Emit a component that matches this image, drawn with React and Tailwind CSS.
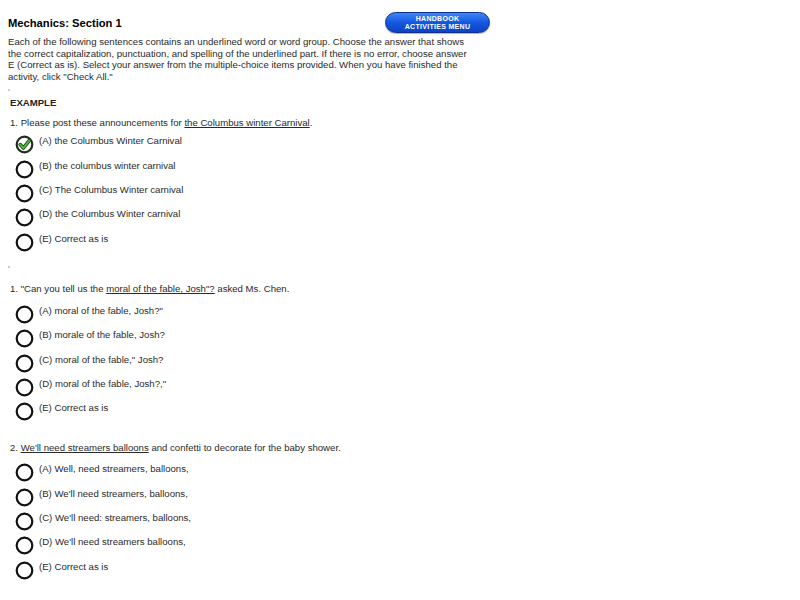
import React from "react";

const sections = [
  {
    dot: true,
    label: "EXAMPLE",
    gap: "mt-[6px]",
    optGap: "mt-[4px]",
    question: (
      <>
        1. Please post these announcements for <span className="underline">the Columbus winter Carnival</span>.
      </>
    ),
    options: [
      "(A) the Columbus Winter Carnival",
      "(B) the columbus winter carnival",
      "(C) The Columbus Winter carnival",
      "(D) the Columbus Winter carnival",
      "(E) Correct as is",
    ],
    checked: 0,
  },
  {
    dot: true,
    gap: "mt-[12px]",
    optGap: "mt-[7px]",
    question: (
      <>
        1. "Can you tell us the <span className="underline">moral of the fable, Josh"?</span> asked Ms. Chen.
      </>
    ),
    options: [
      '(A) moral of the fable, Josh?"',
      "(B) morale of the fable, Josh?",
      '(C) moral of the fable," Josh?',
      '(D) moral of the fable, Josh?,"',
      "(E) Correct as is",
    ],
  },
  {
    gap: "mt-[18px]",
    optGap: "mt-[7px]",
    question: (
      <>
        2. <span className="underline">We'll need streamers balloons</span> and confetti to decorate for the baby shower.
      </>
    ),
    options: [
      "(A) Well, need streamers, balloons,",
      "(B) We'll need streamers, balloons,",
      "(C) We'll need: streamers, balloons,",
      "(D) We'll need streamers balloons,",
      "(E) Correct as is",
    ],
  },
];

function Radio({ checked }) {
  return (
    <svg width="19" height="19" viewBox="0 0 19 19" className="shrink-0">
      <circle cx="9.5" cy="9.5" r="7.8" fill="white" stroke={checked ? "#1f2d1f" : "#111"} strokeWidth="2.2" />
      {checked && (
        <>
          <path d="M5.2 9.6 L8.4 13 L14.2 5.6" fill="none" stroke="#1d3d1d" strokeWidth="3.6" strokeLinecap="round" strokeLinejoin="round" />
          <path d="M5.2 9.6 L8.4 13 L14.2 5.6" fill="none" stroke="#4cbb3c" strokeWidth="2" strokeLinecap="round" strokeLinejoin="round" />
        </>
      )}
    </svg>
  );
}

export default function App() {
  return (
    <div className="w-[800px] h-[600px] bg-white text-[#2a2a2a] overflow-hidden" style={{ fontFamily: '"Liberation Sans", Arial, sans-serif' }}>
      <div className="flex items-center justify-between w-[490px] pl-[8px] pt-[12px]">
        <h1 className="text-[11.2px] font-bold text-black leading-[14px]">Mechanics: Section 1</h1>
        <button className="w-[105px] h-[21px] rounded-full border border-[#0b2f8a] bg-gradient-to-b from-[#3f86f5] via-[#1458e0] to-[#0d43c4] text-white text-[7px] font-bold leading-[7.5px] tracking-[0.3px] flex flex-col items-center justify-center shadow-[0_1px_1px_rgba(0,0,0,0.3)]">
          <span>HANDBOOK</span>
          <span>ACTIVITIES MENU</span>
        </button>
      </div>

      <p className="pl-[8px] mt-[3px] text-[9.6px] leading-[11.7px]">
        Each of the following sentences contains an underlined word or word group. Choose the answer that shows
        <br />
        the correct capitalization, punctuation, and spelling of the underlined part. If there is no error, choose answer
        <br />
        E (Correct as is). Select your answer from the multiple-choice items provided. When you have finished the
        <br />
        activity, click "Check All."
      </p>

      {sections.map((s, i) => (
        <div key={i} className={s.gap}>
          {s.dot && <div className="ml-[8px] w-[2px] h-[2px] rounded-full bg-[#bbb]" />}
          {s.label && <div className="pl-[10px] mt-[6px] text-[9.6px] font-bold leading-[12px] text-[#222]">{s.label}</div>}
          <div className={"pl-[10px] text-[9.6px] leading-[12px] " + (s.label ? "mt-[8px]" : "mt-[15px]")}>{s.question}</div>
          <div className={s.optGap}>
            {s.options.map((o, j) => (
              <div key={j} className="h-[24.3px] flex items-center pl-[15px] gap-[5px]">
                <Radio checked={s.checked === j} />
                <span className="text-[9.6px] leading-[12px] -mt-[7px]">{o}</span>
              </div>
            ))}
          </div>
        </div>
      ))}
    </div>
  );
}
